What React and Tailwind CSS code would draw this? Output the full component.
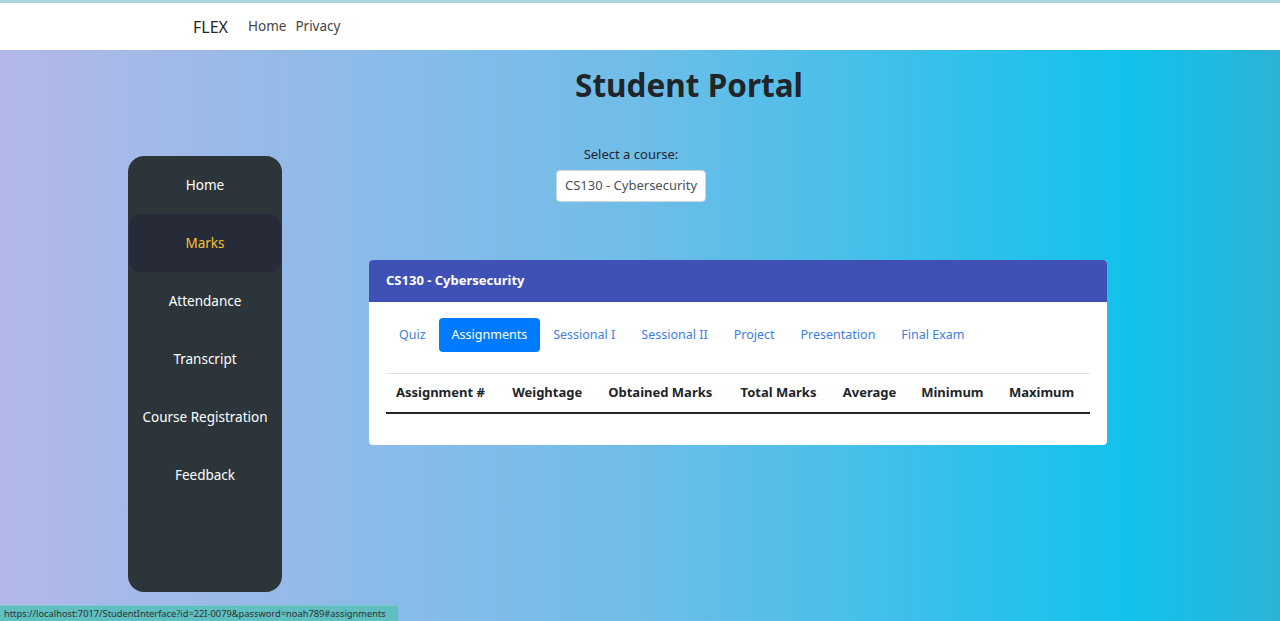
import React, { useState } from 'react';

const font = { fontFamily: '"Noto Sans", "Open Sans", sans-serif' };

const sideItems = ['Home', 'Marks', 'Attendance', 'Transcript', 'Course Registration', 'Feedback'];
const tabs = ['Quiz', 'Assignments', 'Sessional I', 'Sessional II', 'Project', 'Presentation', 'Final Exam'];
const columns = ['Assignment #', 'Weightage', 'Obtained Marks', 'Total Marks', 'Average', 'Minimum', 'Maximum'];

export default function App() {
  const [active, setActive] = useState('Marks');
  const [tab, setTab] = useState('Assignments');

  return (
    <div className="relative h-[621px] overflow-hidden text-[#212529]" style={font}>
      {/* top nav */}
      <nav className="h-[50px] bg-white border-t-[3px] border-[#a9d3da] flex items-center pl-[193px]">
        <span className="text-[16px] text-[#212529] mr-[20px]">FLEX</span>
        <a className="text-[13.5px] text-[#454545] mr-[9px]">Home</a>
        <a className="text-[13.5px] text-[#454545]">Privacy</a>
      </nav>

      <div className="h-[571px] bg-[linear-gradient(to_right,#b3b8e8_0%,#6fbde8_50%,#12c2eb_88%,#2bb3d7_100%)]">
        <h1 className="pl-[98px] pt-[14px] text-center text-[31.5px] leading-[42px] font-bold text-[#212529]">
          Student Portal
        </h1>

        <div className="flex mt-[38px]">
          {/* sidebar */}
          <aside className="ml-[128px] mt-[12px] w-[154px] h-[436px] rounded-[16px] bg-[#2c3539] flex flex-col">
            {sideItems.map((item) => (
              <button
                key={item}
                onClick={() => setActive(item)}
                className={`h-[58px] mx-[1px] rounded-[12px] text-[13.5px] ${
                  active === item ? 'bg-[#272a37] text-[#f5c430]' : 'text-white'
                }`}
              >
                {item}
              </button>
            ))}
          </aside>

          {/* main */}
          <main className="flex-1">
            <div className="ml-[274px] w-[150px] flex flex-col items-center">
              <label className="text-[13px] leading-[20px] text-[#212529]">Select a course:</label>
              <div className="mt-[6px] w-full h-[32px] bg-white rounded-[4px] border border-[#ced4da] flex items-center justify-center text-[13px] text-[#495057]">
                CS130 - Cybersecurity
              </div>
            </div>

            <div className="ml-[87px] mt-[58px] w-[738px] bg-white rounded-[4px] overflow-hidden">
              <div className="h-[42px] bg-[#3f51b5] flex items-center px-[17px] text-white text-[13px] font-bold">
                CS130 - Cybersecurity
              </div>
              <div className="px-[17px] pt-[16px] pb-[31px]">
                <div className="flex">
                  {tabs.map((t) => (
                    <button
                      key={t}
                      onClick={() => setTab(t)}
                      className={`h-[34px] px-[13px] rounded-[4px] text-[12.5px] ${
                        tab === t ? 'bg-[#007bff] text-white' : 'text-[#3d7ee6]'
                      }`}
                    >
                      {t}
                    </button>
                  ))}
                </div>
                <table className="w-full mt-[21px] border-t border-[#dee2e6] text-[13px]">
                  <thead>
                    <tr className="border-b-2 border-[#212529]">
                      {columns.map((c) => (
                        <th key={c} className="h-[39px] px-[10px] text-left font-bold text-[#212529]">
                          {c}
                        </th>
                      ))}
                    </tr>
                  </thead>
                  <tbody />
                </table>
              </div>
            </div>
          </main>
        </div>
      </div>

      <div className="absolute left-0 bottom-0 h-[16px] w-[398px] bg-[#5fbfc1] border-t border-[#7cc9cc] pl-[4px] text-[9.3px] leading-[15px] whitespace-nowrap overflow-hidden text-[#303030]">
        https://localhost:7017/StudentInterface?id=22I-0079&amp;password=noah789#assignments
      </div>
    </div>
  );
}
